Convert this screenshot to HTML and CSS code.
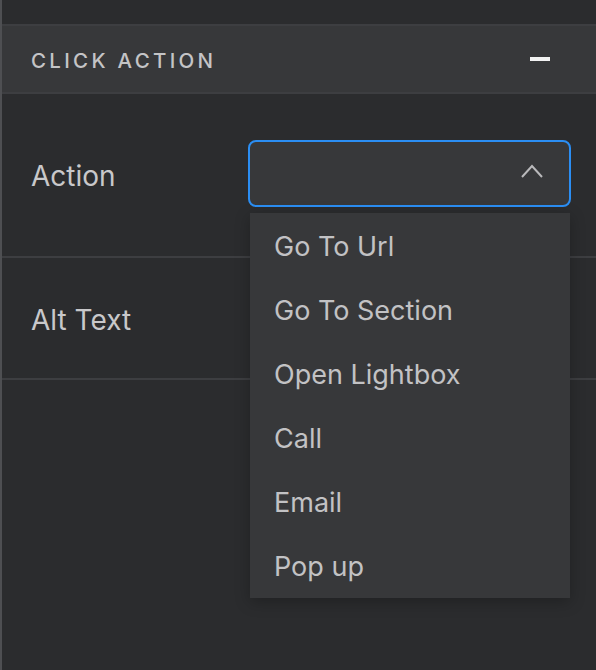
FILE: index.html
```html
<!DOCTYPE html>
<html>
<head>
<meta charset="utf-8">
<link rel="stylesheet" href="styles.css">
</head>
<body>
<div class="panel">
  <div class="section-header">
    <span class="section-title">CLICK ACTION</span>
    <span class="collapse-icon"></span>
  </div>
  <div class="row row-action">
    <span class="label">Action</span>
    <div class="select-wrap">
      <div class="select">
        <svg class="chevron" width="22" height="14" viewBox="0 0 22 14"><polyline points="1,13 11,2 21,13" fill="none" stroke="#b9b9bb" stroke-width="2"/></svg>
      </div>
      <ul class="menu">
        <li>Go To Url</li>
        <li>Go To Section</li>
        <li>Open Lightbox</li>
        <li>Call</li>
        <li>Email</li>
        <li>Pop up</li>
      </ul>
    </div>
  </div>
  <div class="row row-alt">
    <span class="label">Alt Text</span>
  </div>
</div>
</body>
</html>
```
FILE: styles.css
```css
html, body {
  margin: 0;
  padding: 0;
  background: #2b2c2e;
}
body {
  font-family: Inter, "Noto Sans", sans-serif;
  color: #c6c6c8;
}
.panel {
  border-left: 2px solid #4e4f52;
  min-height: 670px;
  box-sizing: border-box;
  padding-top: 24px;
}
.section-header {
  border-top: 2px solid #3d3e41;
  border-bottom: 2px solid #3d3e41;
  background: #37383a;
  height: 66px;
  box-sizing: content-box;
  display: flex;
  align-items: center;
  justify-content: space-between;
  padding: 0 46px 0 29px;
}
.section-title {
  font-size: 20.5px;
  font-weight: 500;
  letter-spacing: 3.3px;
  color: #c4c4c6;
  padding-top: 3px;
}
.collapse-icon {
  width: 20px;
  height: 4px;
  background: #f2f2f2;
}
.row {
  display: flex;
  align-items: center;
  border-bottom: 2px solid #3d3e41;
  padding-left: 29px;
}
.row-action {
  height: 162px;
}
.row-alt {
  height: 120px;
}
.label {
  font-size: 28px;
  color: #c8c8ca;
  width: 217px;
  padding-top: 2px;
}
.row-alt .label {
  padding-top: 3px;
}
.select-wrap {
  position: relative;
  width: 323px;
  margin-bottom: 3px;
}
.select {
  height: 67px;
  box-sizing: border-box;
  border: 2px solid #2b8ef3;
  border-radius: 8px;
  background: #37383a;
  display: flex;
  align-items: center;
  justify-content: flex-end;
  padding-right: 26px;
}
.chevron {
  display: block;
  margin-top: -6px;
}
.menu {
  position: absolute;
  top: 73px;
  left: 2px;
  right: 1px;
  margin: 0;
  padding: 0 0 1px;
  list-style: none;
  background: #37383a;
  box-shadow: 0 4px 14px rgba(0, 0, 0, 0.25);
  z-index: 2;
}
.menu li {
  height: 64px;
  box-sizing: border-box;
  padding-top: 2px;
  display: flex;
  align-items: center;
  padding-left: 24px;
  font-size: 27px;
  color: #c2c2c4;
}
```
